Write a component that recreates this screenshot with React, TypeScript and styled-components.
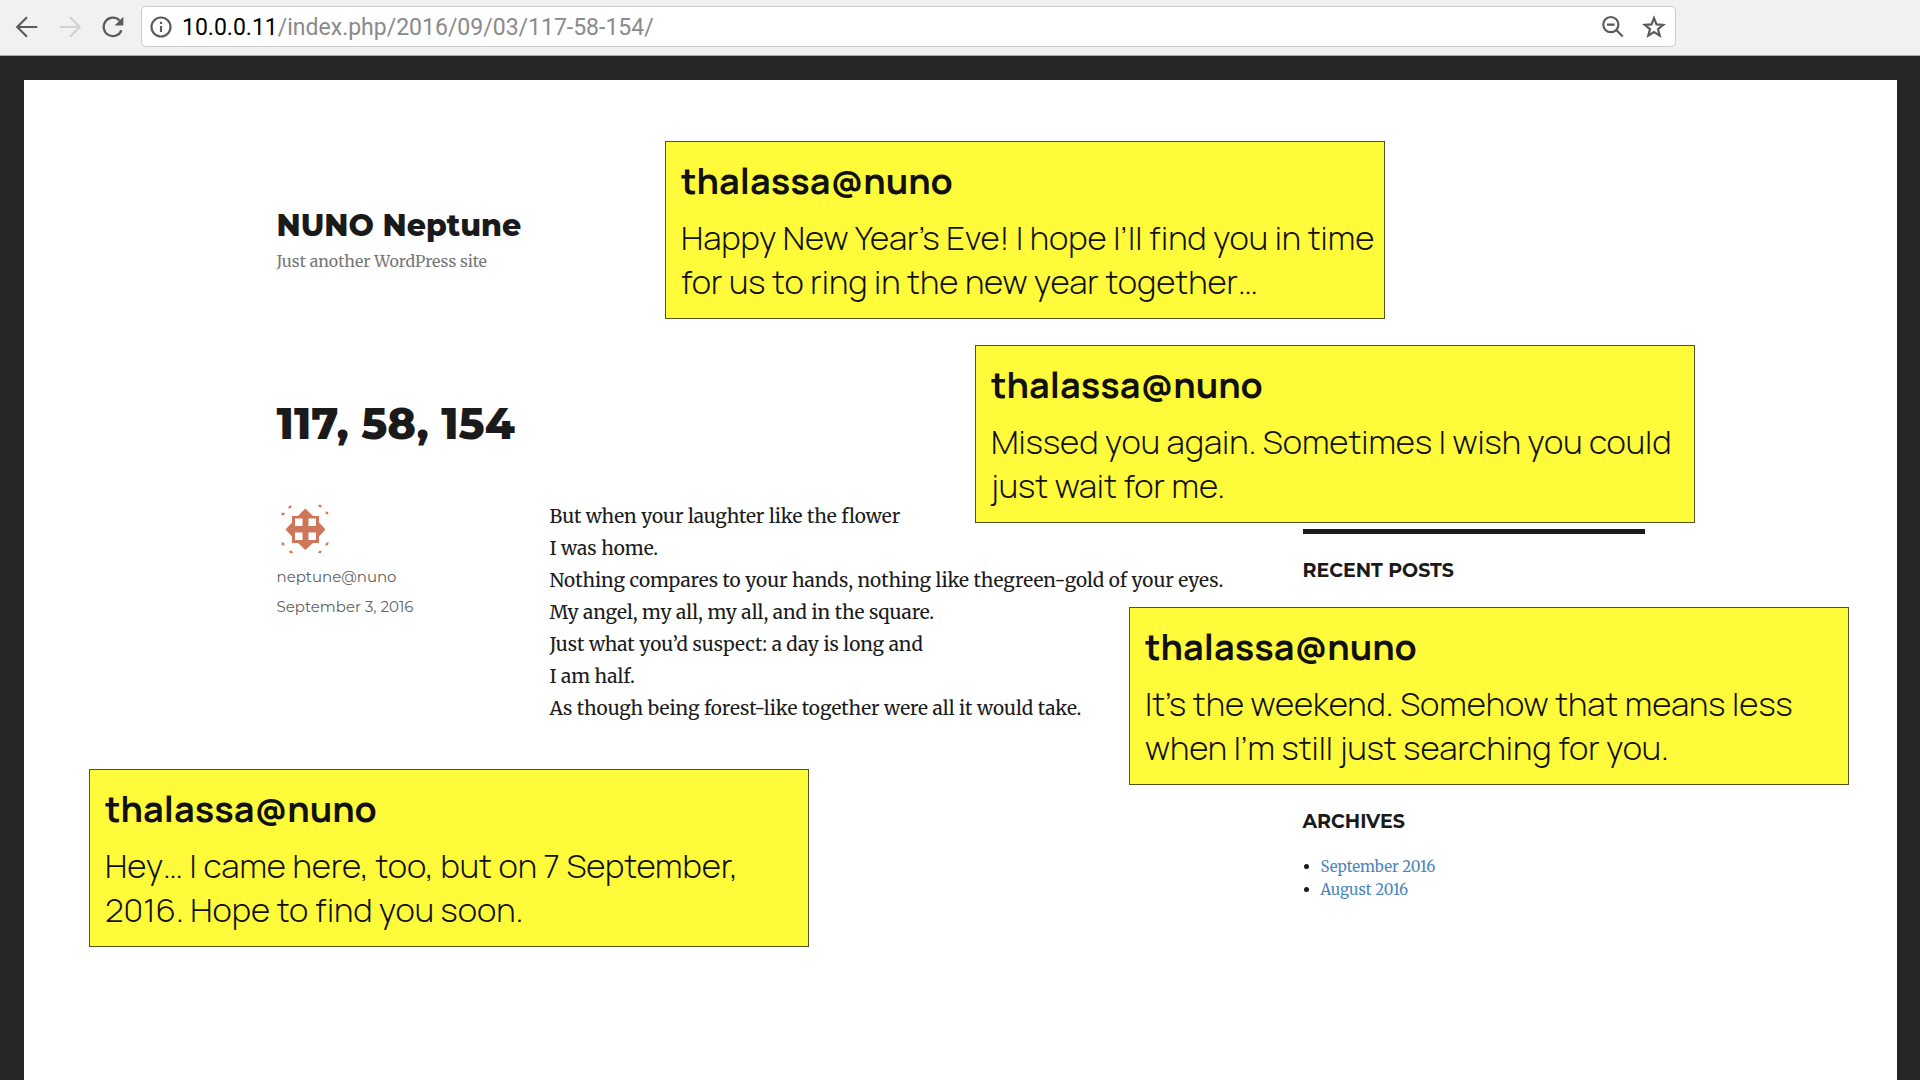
import React from "react";
import styled, { createGlobalStyle } from "styled-components";

const sans = `Montserrat, Inter, "Open Sans", sans-serif`;
const serif = `Merriweather, "DejaVu Serif Condensed", "DejaVu Serif", serif`;

const GlobalStyle = createGlobalStyle`
  *, *::before, *::after { box-sizing: border-box; }
  body { margin: 0; background: #262626; color: #1a1a1a; font-family: ${serif}; }
  h1, h2, h3, p, ul { margin: 0; padding: 0; }
`;

const Window = styled.div`
  display: flex;
  flex-direction: column;
  min-height: 100vh;
  overflow: hidden;
`;

const Toolbar = styled.header`
  display: flex;
  align-items: center;
  gap: 13px;
  height: 56px;
  padding: 0 244px 2px 12px;
  background: #f1f1f1;
  border-bottom: 1px solid #a8a8a8;
`;

const ToolButton = styled.button`
  display: grid;
  place-items: center;
  flex: none;
  width: 30px;
  height: 30px;
  padding: 0;
  border: 0;
  background: none;
  color: #5a5a5a;

  &:disabled { color: #d2d2d2; }
`;

const AddressBar = styled.form`
  display: flex;
  align-items: center;
  flex: 1;
  height: 41px;
  padding: 1px 6px 0 4px;
  background: #fff;
  border: 1px solid #cbcbcb;
  border-radius: 5px;
  font: 23px/28px Roboto, sans-serif;
`;

const Host = styled.label`
  padding: 2px 0 0 6px;
  color: #000;
`;

const PathInput = styled.input`
  flex: 1;
  min-width: 0;
  padding: 2px 0 0;
  border: 0;
  outline: 0;
  background: none;
  color: #8a8a8a;
  font: inherit;
`;

const BarActions = styled.div`
  display: flex;
  gap: 11px;
`;

const Sheet = styled.div`
  position: relative;
  flex: 1;
  margin: 24px 23px 0 24px;
  padding: 126px 24px 24px;
  background: #fff;
`;

const Container = styled.div`
  max-width: 1368px;
  margin: 0 auto;
`;

const SiteTitle = styled.p`
  font: 800 30px/40px ${sans};
`;

const Tagline = styled.p`
  margin-top: 3px;
  font-size: 16px;
  line-height: 24px;
  color: #777;
`;

const Columns = styled.div`
  display: grid;
  grid-template-columns: minmax(0, 1fr) 25%;
  margin-top: 125px;
`;

const EntryTitle = styled.h1`
  font: 800 43px/52px ${sans};
`;

const Entry = styled.div`
  display: grid;
  grid-template-columns: 205px minmax(0, 1fr);
  gap: 68px;
  margin-top: 50px;
`;

const Meta = styled.div`
  padding-top: 2px;
  font: 15px/30px ${sans};
  color: #606060;

  svg { display: block; margin-bottom: 4px; }
`;

const Poem = styled.p`
  font-size: 19px;
  line-height: 32px;
`;

const Line = styled.span`
  display: block;
`;

const Sidebar = styled.aside`
  display: flex;
  flex-direction: column;
  padding-top: 131px;
`;

const Widget = styled.section<{ $space?: number }>`
  margin-bottom: ${(p) => p.$space ?? 0}px;
  padding-top: 25px;
  border-top: 5px solid #1a1a1a;
`;

const WidgetTitle = styled.h2`
  font: 700 19px/24px ${sans};
  text-transform: uppercase;
`;

const ArchiveList = styled.ul`
  margin-top: 21px;
  padding-left: 18px;
  font-size: 15px;
  line-height: 23px;
`;

const ArchiveLink = styled.a`
  color: #4a86bd;
  text-decoration: none;
`;

const NoteCard = styled.article<{ $x: number; $y: number }>`
  position: absolute;
  left: ${(p) => p.$x}px;
  top: ${(p) => p.$y}px;
  width: 720px;
  padding: 17px 8px 14px 15px;
  background: #fffb3a;
  border: 1px solid #55541f;
  color: #111;
`;

const NoteAuthor = styled.h3`
  font: 700 36px/44px Manrope, Inter, sans-serif;
`;

const NoteText = styled.p`
  margin-top: 13px;
  font: 300 33px/44px Manrope, Inter, sans-serif;
`;

const Icon = ({ children }: { children: React.ReactNode }) => (
  <svg width="26" height="26" viewBox="0 0 24 24" fill="none" stroke="currentColor" strokeWidth="2" aria-hidden="true">
    {children}
  </svg>
);

const specks = [
  [13, 5, -35], [43, 4, 35], [50, 11, 55], [6, 12, -20],
  [6, 42, 50], [14, 50, 20], [43, 50, -30], [50, 42, -40],
];

const Identicon = () => (
  <svg width="56" height="56" viewBox="0 0 56 56" aria-hidden="true">
    <g fill="#cf7658">
      <path d="M28.300 6.500 36 14H42V20.500L48.500 27.500 42 34.500V41H36L28.300 48 21 41H15V34.500L8.500 27.500 15 20.500V14H21Z" />
      {specks.map(([x, y, r]) => (
        <path key={`${x}-${y}`} d="M-2.200 0 0-1.500 2.200 0 0 1.500Z" transform={`translate(${x} ${y}) rotate(${r})`} />
      ))}
    </g>
    <path fill="#fff" d="M18 16.500h7.500v7.500h-7.500zM31.500 16.500h7.500v7.500h-7.500zM18 30.500h7.500v7.500h-7.500zM31.500 30.500h7.500v7.500h-7.500z" />
  </svg>
);

const poem = [
  "But when your laughter like the flower",
  "I was home.",
  "Nothing compares to your hands, nothing like thegreen-gold of your eyes.",
  "My angel, my all, my all, and in the square.",
  "Just what you’d suspect: a day is long and",
  "I am half.",
  "As though being forest-like together were all it would take.",
];

const notes = [
  { x: 641, y: 61, text: "Happy New Year’s Eve! I hope I’ll find you in time for us to ring in the new year together…" },
  { x: 951, y: 265, text: "Missed you again. Sometimes I wish you could just wait for me." },
  { x: 1105, y: 527, text: "It’s the weekend. Somehow that means less when I’m still just searching for you." },
  { x: 65, y: 689, text: "Hey… I came here, too, but on 7 September, 2016. Hope to find you soon." },
];

export default function App() {
  return (
    <Window>
      <GlobalStyle />
      <Toolbar>
        <ToolButton aria-label="Back">
          <Icon><path d="M21.500 12H3.500M12 3 3 12l9 9" /></Icon>
        </ToolButton>
        <ToolButton aria-label="Forward" disabled>
          <Icon><path d="M2.500 12h18M12 3l9 9-9 9" /></Icon>
        </ToolButton>
        <ToolButton aria-label="Reload">
          <Icon>
            <path d="M19.800 15A8.500 8.500 0 1 1 18 6" />
            <path d="M21.500 2.500V10.500H13.500Z" fill="currentColor" stroke="none" />
          </Icon>
        </ToolButton>
        <AddressBar onSubmit={(e) => e.preventDefault()}>
          <ToolButton type="button" aria-label="View site information">
            <Icon>
              <circle cx="12" cy="12" r="8.800" />
              <path d="M12 11v5.500M12 7.200v2" />
            </Icon>
          </ToolButton>
          <Host htmlFor="path">10.0.0.11</Host>
          <PathInput id="path" defaultValue="/index.php/2016/09/03/117-58-154/" spellCheck={false} />
          <BarActions>
            <ToolButton type="button" aria-label="Zoom out">
              <Icon>
                <circle cx="10" cy="9.800" r="7" />
                <path d="M6.500 9.800h7M15 14.800l6 6" />
              </Icon>
            </ToolButton>
            <ToolButton type="button" aria-label="Bookmark this page">
              <Icon>
                <path d="M12 3.800 14.300 9.600 20.500 10 15.700 14 17.300 20 12 16.700 6.700 20 8.300 14 3.500 10 9.700 9.600Z" />
              </Icon>
            </ToolButton>
          </BarActions>
        </AddressBar>
      </Toolbar>

      <Sheet>
        <Container>
          <header>
            <SiteTitle>NUNO Neptune</SiteTitle>
            <Tagline>Just another WordPress site</Tagline>
          </header>
          <Columns>
            <main>
              <EntryTitle>117, 58, 154</EntryTitle>
              <Entry>
                <Meta>
                  <Identicon />
                  <div>neptune@nuno</div>
                  <time dateTime="2016-09-03">September 3, 2016</time>
                </Meta>
                <Poem>
                  {poem.map((line) => <Line key={line}>{line}</Line>)}
                </Poem>
              </Entry>
            </main>
            <Sidebar>
              <Widget $space={197}>
                <WidgetTitle>Recent Posts</WidgetTitle>
              </Widget>
              <Widget>
                <WidgetTitle>Archives</WidgetTitle>
                <ArchiveList>
                  <li><ArchiveLink href="#september">September 2016</ArchiveLink></li>
                  <li><ArchiveLink href="#august">August 2016</ArchiveLink></li>
                </ArchiveList>
              </Widget>
            </Sidebar>
          </Columns>
        </Container>
        {notes.map((note) => (
          <NoteCard key={note.x} $x={note.x} $y={note.y}>
            <NoteAuthor>thalassa@nuno</NoteAuthor>
            <NoteText>{note.text}</NoteText>
          </NoteCard>
        ))}
      </Sheet>
    </Window>
  );
}
